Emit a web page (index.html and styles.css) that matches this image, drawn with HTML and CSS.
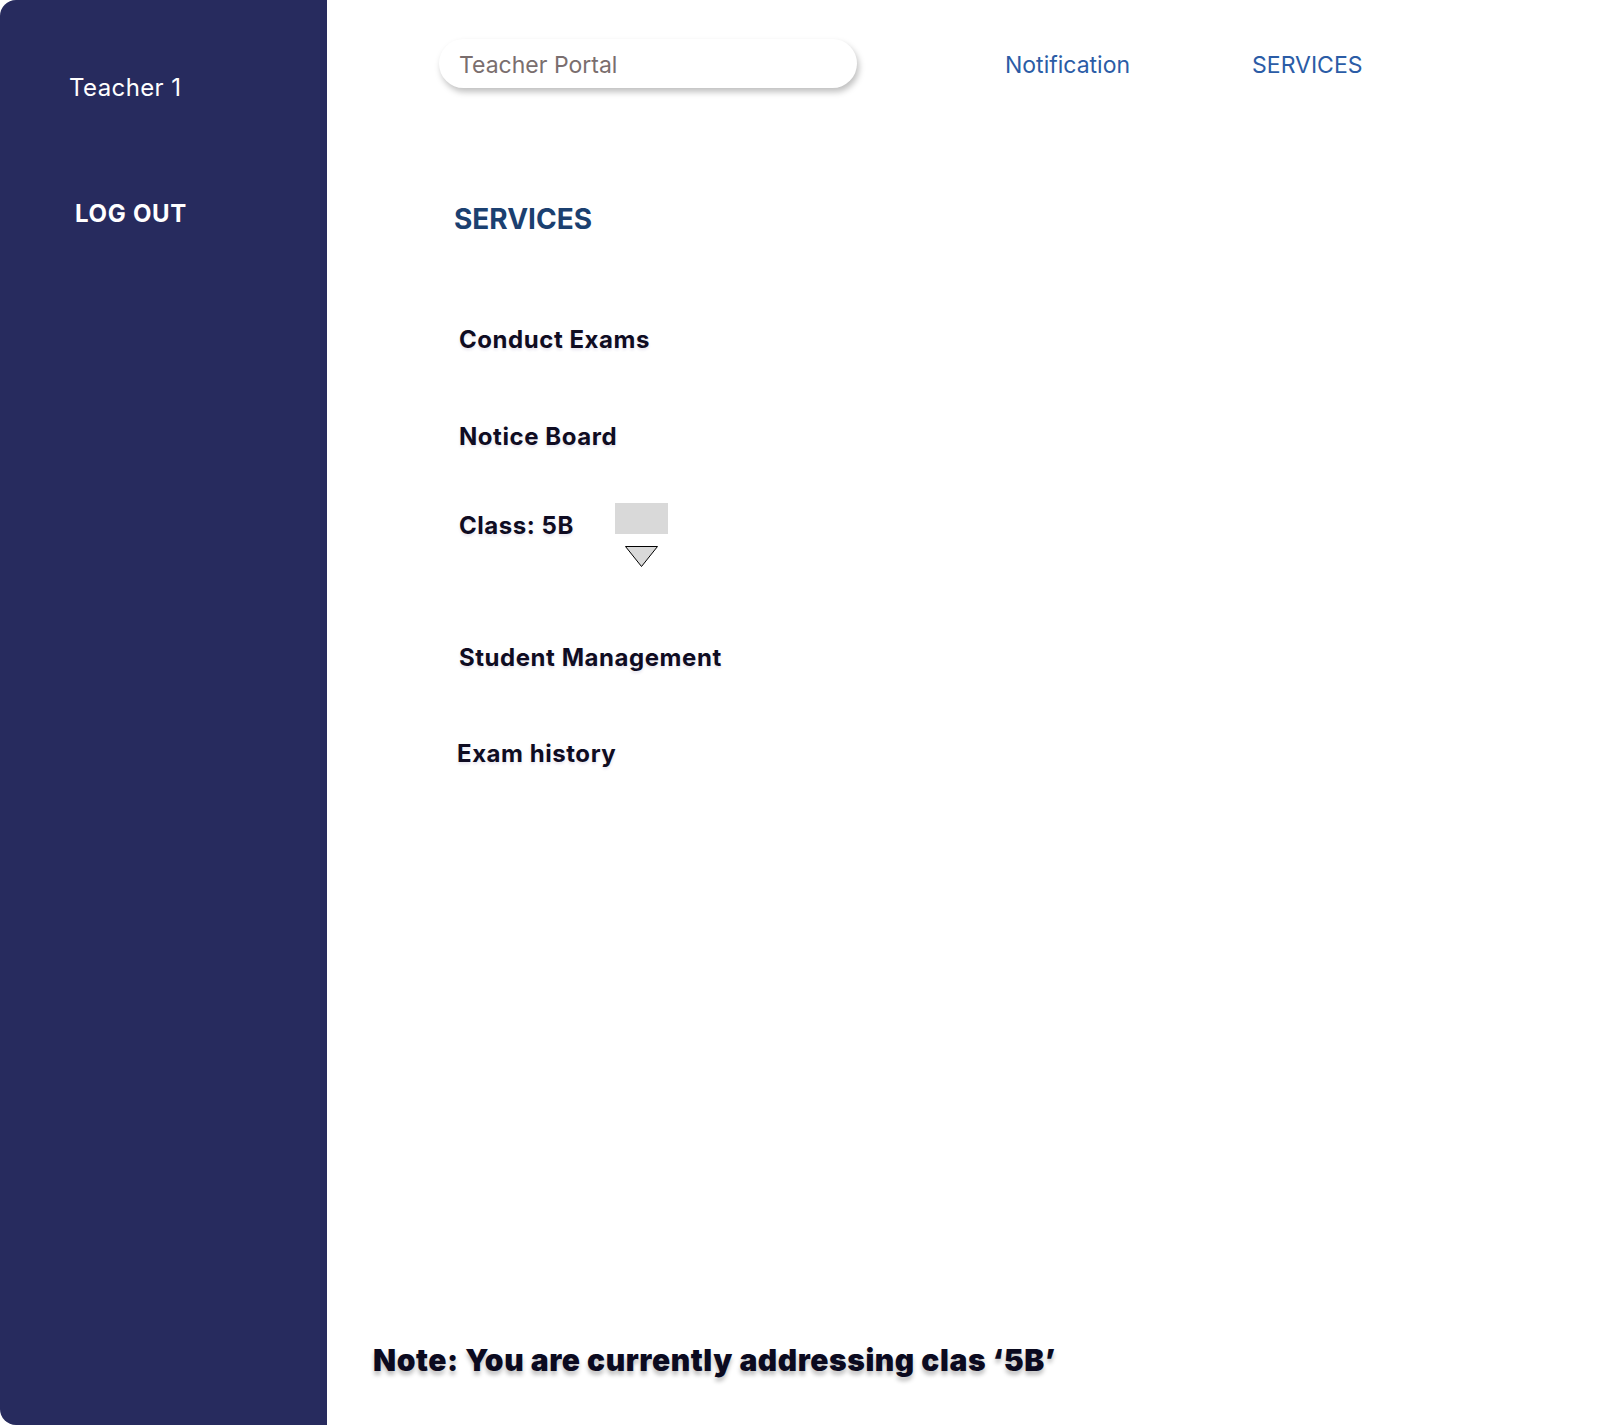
FILE: index.html
```html
<!DOCTYPE html>
<html lang="en">
<head>
<meta charset="utf-8">
<title>Teacher Portal</title>
<link rel="stylesheet" href="styles.css">
</head>
<body>
<div class="app">
  <aside class="sidebar">
    <div class="user">Teacher 1</div>
    <div class="logout">LOG OUT</div>
  </aside>
  <main class="main">
    <header class="topbar">
      <div class="search">Teacher Portal</div>
      <a class="nav-link nav-notification">Notification</a>
      <a class="nav-link nav-services">SERVICES</a>
    </header>
    <section class="services">
      <h1 class="services-title">SERVICES</h1>
      <div class="item item-conduct">Conduct Exams</div>
      <div class="item item-notice">Notice Board</div>
      <div class="class-row">
        <div class="item class-label">Class: 5B</div>
        <div class="selector">
          <div class="selector-box"></div>
          <svg class="selector-arrow" width="33" height="21" viewBox="0 0 33 21">
            <polygon points="0.5,0.5 32.5,0.5 16.5,20.5" fill="#d9d9d9" stroke="#000" stroke-width="1"/>
          </svg>
        </div>
      </div>
      <div class="item item-student">Student Management</div>
      <div class="item item-history">Exam history</div>
    </section>
    <p class="note">Note: You are currently addressing clas ‘5B’</p>
  </main>
</div>
</body>
</html>
```

FILE: styles.css
```css
* { box-sizing: border-box; }
html, body { margin: 0; padding: 0; background: #fff; }
body { font-family: Inter, "Noto Sans", sans-serif; }

.app {
  display: flex;
  min-height: 1425px;
}

.sidebar {
  width: 327px;
  flex: 0 0 327px;
  background: #272b5e;
  border-radius: 16px 0 0 16px;
  padding: 76px 0 0 69px;
  color: #fff;
}

.user {
  font-size: 24px;
  line-height: 24px;
  font-weight: 400;
  letter-spacing: 0.4px;
}

.logout {
  margin-top: 102px;
  margin-left: 6px;
  font-size: 24px;
  line-height: 24px;
  font-weight: 700;
  letter-spacing: 0.7px;
}

.main {
  flex: 1;
  display: flex;
  flex-direction: column;
}

.topbar {
  display: flex;
  align-items: center;
  padding: 39px 0 0 112px;
}

.search {
  width: 418px;
  height: 49px;
  border-radius: 25px;
  background: #fff;
  box-shadow: 2px 4px 6px rgba(0, 0, 0, 0.25);
  display: flex;
  align-items: center;
  padding: 2px 0 0 20px;
  font-size: 23px;
  color: #7a6e6e;
}

.nav-link {
  font-size: 23px;
  line-height: 24px;
  color: #2b5ca6;
  text-decoration: none;
}

.nav-notification { margin-left: 148px; margin-top: 2px; }
.nav-services { margin-left: 122px; margin-top: 2px; }

.services {
  padding-left: 127px;
  display: flex;
  flex-direction: column;
  align-items: flex-start;
}

.services-title {
  margin: 117px 0 0 0;
  font-size: 28px;
  line-height: 28px;
  font-weight: 700;
  color: #1b4070;
}

.item {
  font-size: 24px;
  line-height: 24px;
  font-weight: 700;
  letter-spacing: 0.55px;
  color: #0f0c22;
  margin-left: 5px;
  text-shadow: 0 2px 3px rgba(60, 40, 120, 0.12);
}

.item-conduct { margin-top: 95px; }
.item-notice { margin-top: 73px; }

.class-row {
  display: flex;
  align-items: flex-start;
  margin-top: 54px;
}

.class-label {
  width: 156px;
  margin-top: 11px;
}

.selector {
  display: flex;
  flex-direction: column;
  align-items: center;
  width: 53px;
}

.selector-box {
  width: 53px;
  height: 31px;
  background: #d9d9d9;
}

.selector-arrow {
  display: block;
  margin-top: 12px;
}

.item-student { margin-top: 79px; }
.item-history { margin-top: 72px; margin-left: 3px; }

.note {
  margin: auto 0 50px 46px;
  font-size: 30px;
  line-height: 30px;
  font-weight: 900;
  letter-spacing: 0.55px;
  color: #0b0a1f;
  text-shadow: 0 4px 4px rgba(0, 0, 0, 0.25);
}
```
